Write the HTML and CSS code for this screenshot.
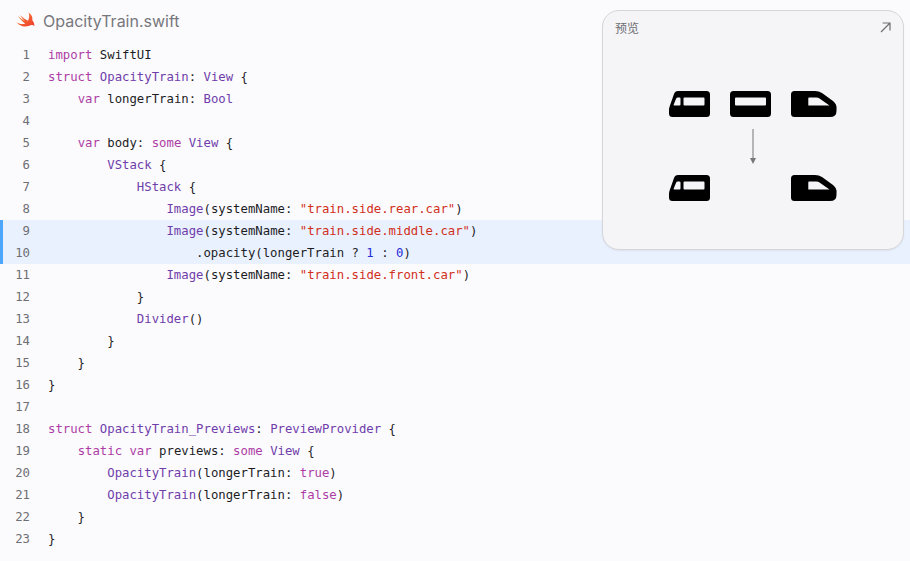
FILE: index.html
```html
<!DOCTYPE html>
<html lang="en">
<head>
<meta charset="utf-8">
<title>OpacityTrain.swift</title>
<link rel="stylesheet" href="styles.css">
</head>
<body>
<main class="listing">
  <header class="file-head">
    <svg class="swift-logo" viewBox="0 0 20 17" width="20" height="17" aria-hidden="true">
      <defs><linearGradient id="sw" x1="0" y1="0" x2="1" y2="1"><stop offset="0" stop-color="#f88a36"/><stop offset="1" stop-color="#ee3b2c"/></linearGradient></defs>
      <path fill="url(#sw)" d="M12.6 .4C15.6 2.4 17 5.4 16.3 8.2C17.8 10 18.5 11.8 18.3 14.4C17.6 13.2 16.5 12.8 15.4 13.1C12.8 14.4 9.6 14.9 6.6 14.2C4.2 13.6 2 12.1 .4 10C3 11.9 6.4 12.7 9.2 11.6C6.4 9.6 3.8 6.8 1.8 3.8C4 5.9 6.6 7.8 8.8 9C7 7.2 5.2 4.9 4 2.9C6.6 5.3 9.8 7.6 12 8.7C13.3 6.2 13.6 3.2 12.6 .4Z"/>
    </svg>
    <span class="file-name">OpacityTrain.swift</span>
  </header>
  <div class="code">
    <div class="line"><span class="num">1</span><code><i class="k">import</i> SwiftUI</code></div>
    <div class="line"><span class="num">2</span><code><i class="k">struct</i> <i class="t">OpacityTrain</i>: <i class="t">View</i> {</code></div>
    <div class="line"><span class="num">3</span><code>    <i class="k">var</i> longerTrain: <i class="t">Bool</i></code></div>
    <div class="line"><span class="num">4</span><code></code></div>
    <div class="line"><span class="num">5</span><code>    <i class="k">var</i> body: <i class="k">some</i> <i class="t">View</i> {</code></div>
    <div class="line"><span class="num">6</span><code>        <i class="t">VStack</i> {</code></div>
    <div class="line"><span class="num">7</span><code>            <i class="t">HStack</i> {</code></div>
    <div class="line"><span class="num">8</span><code>                <i class="t">Image</i>(systemName: <i class="s">"train.side.rear.car"</i>)</code></div>
    <div class="line hl"><span class="num">9</span><code>                <i class="t">Image</i>(systemName: <i class="s">"train.side.middle.car"</i>)</code></div>
    <div class="line hl"><span class="num">10</span><code>                    .opacity(longerTrain ? <i class="n">1</i> : <i class="n">0</i>)</code></div>
    <div class="line"><span class="num">11</span><code>                <i class="t">Image</i>(systemName: <i class="s">"train.side.front.car"</i>)</code></div>
    <div class="line"><span class="num">12</span><code>            }</code></div>
    <div class="line"><span class="num">13</span><code>            <i class="t">Divider</i>()</code></div>
    <div class="line"><span class="num">14</span><code>        }</code></div>
    <div class="line"><span class="num">15</span><code>    }</code></div>
    <div class="line"><span class="num">16</span><code>}</code></div>
    <div class="line"><span class="num">17</span><code></code></div>
    <div class="line"><span class="num">18</span><code><i class="k">struct</i> <i class="t">OpacityTrain_Previews</i>: <i class="t">PreviewProvider</i> {</code></div>
    <div class="line"><span class="num">19</span><code>    <i class="k">static</i> <i class="k">var</i> previews: <i class="k">some</i> <i class="t">View</i> {</code></div>
    <div class="line"><span class="num">20</span><code>        <i class="t">OpacityTrain</i>(longerTrain: <i class="k">true</i>)</code></div>
    <div class="line"><span class="num">21</span><code>        <i class="t">OpacityTrain</i>(longerTrain: <i class="k">false</i>)</code></div>
    <div class="line"><span class="num">22</span><code>    }</code></div>
    <div class="line"><span class="num">23</span><code>}</code></div>
  </div>
</main>
<aside class="preview">
  <div class="preview-head">
    <span class="preview-title">预览</span>
    <svg viewBox="0 0 11 11" width="11" height="11" aria-hidden="true"><path d="M1 10L10 1M2.6 1H10V8.4" fill="none" stroke="#6e6e73" stroke-width="1.2"/></svg>
  </div>
  <div class="stage">
    <div class="train-row">
      <svg class="car" viewBox="0 0 41 26" width="41" height="26"><path fill-rule="evenodd" d="M9 0H37.5Q41 0 41 3.500V22.500Q41 26 37.500 26H3.500Q0 26 0 22.500V19Q0 17 .8 15L5 3Q6 0 9 0ZM8.500 6.500Q7.700 6.500 7.300 7.300L4.700 13.500Q4.300 14.500 5.500 14.500H10.500Q11.500 14.500 11.500 13.500V7.500Q11.500 6.500 10.500 6.500ZM15.500 6.500Q14.500 6.500 14.500 7.500V13.500Q14.500 14.500 15.500 14.500H34.500Q35.500 14.500 35.500 13.500V7.500Q35.500 6.500 34.500 6.500Z"/></svg>
      <svg class="car" viewBox="0 0 41 26" width="41" height="26"><path fill-rule="evenodd" d="M3.500 0H37.500Q41 0 41 3.500V22.500Q41 26 37.500 26H3.500Q0 26 0 22.500V3.500Q0 0 3.500 0ZM6 6.500Q5 6.500 5 7.500V13.500Q5 14.500 6 14.500H35Q36 14.500 36 13.500V7.500Q36 6.500 35 6.500Z"/></svg>
      <svg class="car" viewBox="0 0 46 26" width="46" height="26"><path fill-rule="evenodd" d="M3.500 0H24Q28 0 31 2L42 10Q46 13 45.500 18V20Q45.500 26 39 26H3.500Q0 26 0 22.500V3.500Q0 0 3.500 0ZM18 6.500Q17.300 6.500 17.300 7.500V14.500H38.500L28.500 7.500Q27.500 6.500 25 6.500Z"/></svg>
    </div>
    <svg class="arrow" viewBox="0 0 8 36" width="8" height="36" aria-hidden="true"><path d="M4 0V30" stroke="#8a8a8e" stroke-width="1.200"/><path d="M1 29H7L4 35Z" fill="#77777b"/></svg>
    <div class="train-row">
      <svg class="car" viewBox="0 0 41 26" width="41" height="26"><path fill-rule="evenodd" d="M9 0H37.5Q41 0 41 3.500V22.500Q41 26 37.500 26H3.500Q0 26 0 22.500V19Q0 17 .8 15L5 3Q6 0 9 0ZM8.500 6.500Q7.700 6.500 7.300 7.300L4.700 13.500Q4.300 14.500 5.500 14.500H10.500Q11.500 14.500 11.500 13.500V7.500Q11.500 6.500 10.500 6.500ZM15.500 6.500Q14.500 6.500 14.500 7.500V13.500Q14.500 14.500 15.500 14.500H34.500Q35.500 14.500 35.500 13.500V7.500Q35.500 6.500 34.500 6.500Z"/></svg>
      <span class="car-gap"></span>
      <svg class="car" viewBox="0 0 46 26" width="46" height="26"><path fill-rule="evenodd" d="M3.500 0H24Q28 0 31 2L42 10Q46 13 45.500 18V20Q45.500 26 39 26H3.500Q0 26 0 22.500V3.500Q0 0 3.500 0ZM18 6.500Q17.300 6.500 17.300 7.500V14.500H38.500L28.500 7.500Q27.500 6.500 25 6.500Z"/></svg>
    </div>
  </div>
</aside>
</body>
</html>
```

FILE: styles.css
```css
* { box-sizing: border-box; }
html, body { margin: 0; height: 100%; }
body {
  background: #fbfbfe;
  overflow: hidden;
  position: relative;
  font-family: Inter, "Noto Sans CJK SC", sans-serif;
}
.file-head {
  height: 44px;
  padding: 0 0 3px 16px;
  display: flex;
  align-items: center;
  gap: 7px;
}
.swift-logo { flex: none; }
.file-name { font-size: 16px; color: #77777c; }
.code {
  font-family: "DejaVu Sans Mono", "Liberation Mono", monospace;
  font-size: 12.3px;
  color: #1d1d1f;
}
.line {
  height: 22px;
  line-height: 22px;
  display: flex;
}
.line.hl {
  background: #e9f1fe;
  box-shadow: inset 3px 0 0 #4ea6fb;
}
.num {
  width: 30px;
  flex: none;
  text-align: right;
  color: #6e6e73;
}
code {
  font: inherit;
  margin-left: 18px;
  white-space: pre;
}
code i { font-style: normal; }
.k { color: #ad3da4; }
.t { color: #703daa; }
.s { color: #d12f1b; }
.n { color: #272ad8; }
.preview {
  position: absolute;
  left: 602px;
  top: 10px;
  width: 302px;
  height: 240px;
  background: #f5f5f8;
  border: 1px solid #d6d6da;
  border-radius: 17px;
  box-shadow: 0 1px 2px rgba(0,0,0,.06);
  padding: 8px 12px 0;
}
.preview-head {
  display: flex;
  justify-content: space-between;
  align-items: center;
  height: 16px;
}
.preview-title { font-size: 12px; color: #6e6e73; }
.stage {
  margin-top: 56px;
  display: flex;
  flex-direction: column;
  align-items: center;
}
.train-row {
  display: flex;
  gap: 20px;
  height: 26px;
}
.car { display: block; fill: #000; }
.car-gap { width: 41px; }
.arrow { display: block; margin: 12px 0 10px; }
```
